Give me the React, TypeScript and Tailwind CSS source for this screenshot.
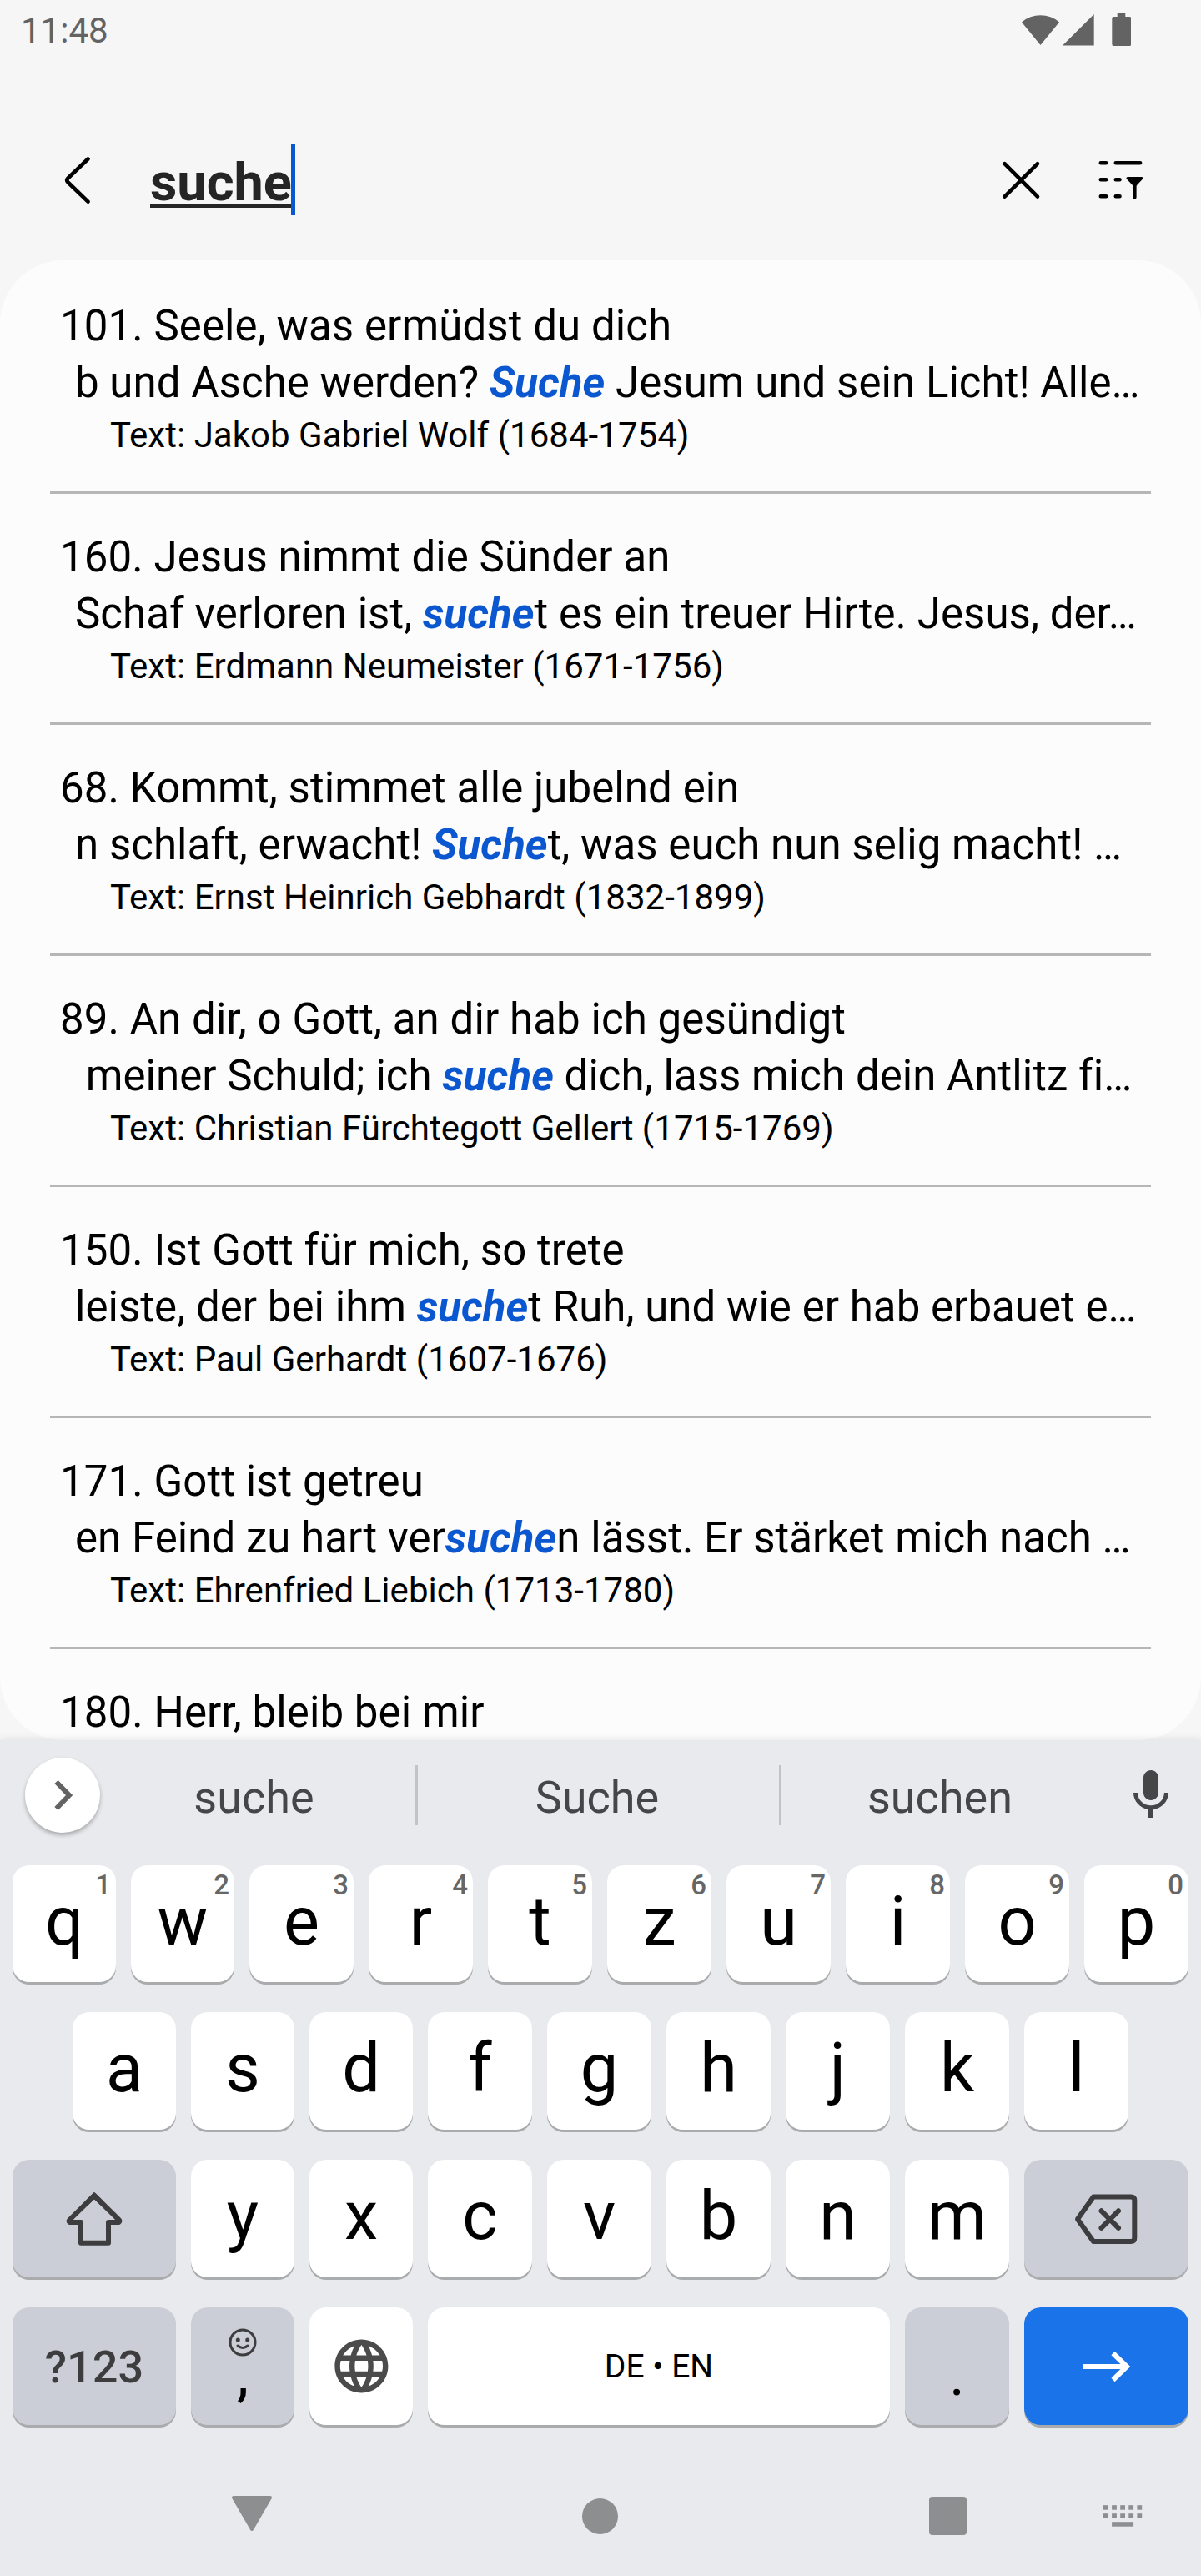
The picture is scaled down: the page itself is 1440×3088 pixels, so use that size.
import type { ReactNode } from 'react';

type Song = { title: string; before: string; hit: string; after: string; author: string };

const songs: Song[] = [
  { title: '101. Seele, was ermüdst du dich', before: 'b und Asche werden? ', hit: 'Suche', after: ' Jesum und sein Licht! Alle…', author: 'Text: Jakob Gabriel Wolf (1684-1754)' },
  { title: '160. Jesus nimmt die Sünder an', before: 'Schaf verloren ist, ', hit: 'suche', after: 't es ein treuer Hirte. Jesus, der…', author: 'Text: Erdmann Neumeister (1671-1756)' },
  { title: '68. Kommt, stimmet alle jubelnd ein', before: 'n schlaft, erwacht! ', hit: 'Suche', after: 't, was euch nun selig macht! …', author: 'Text: Ernst Heinrich Gebhardt (1832-1899)' },
  { title: '89. An dir, o Gott, an dir hab ich gesündigt', before: ' meiner Schuld; ich ', hit: 'suche', after: ' dich, lass mich dein Antlitz fi…', author: 'Text: Christian Fürchtegott Gellert (1715-1769)' },
  { title: '150. Ist Gott für mich, so trete', before: 'leiste, der bei ihm ', hit: 'suche', after: 't Ruh, und wie er hab erbauet e…', author: 'Text: Paul Gerhardt (1607-1676)' },
  { title: '171. Gott ist getreu', before: 'en Feind zu hart ver', hit: 'suche', after: 'n lässt. Er stärket mich nach …', author: 'Text: Ehrenfried Liebich (1713-1780)' },
  { title: '180. Herr, bleib bei mir', before: '', hit: '', after: '', author: '' },
];

function StatusBar() {
  return (
    <div className="flex h-[72px] items-center justify-between pl-[25px] pr-[84px] text-[#636363]">
      <span className="pt-[2px] text-[42px] leading-[74px]">11:48</span>
      <svg className="h-[72px] w-[131px]" viewBox="1225 0 131 72" fill="currentColor">
        <path d="M1247.5 54 1225 26.5a34.5 34.5 0 0 1 45 0Z" />
        <path d="M1274 54.5h37.7V17Z" />
        <path d="M1339.7 20v-4h9.6v4h5a2 2 0 0 1 2 2v31a2 2 0 0 1-2 2h-19a2 2 0 0 1-2-2V22a2 2 0 0 1 2-2Z" />
      </svg>
    </div>
  );
}

function Toolbar() {
  return (
    <div className="flex h-[240px] items-start pl-[76px] pr-[67px] pt-[101px]">
      <svg className="mt-[13px] h-[60px] w-9" viewBox="76 186 36 60" fill="none" stroke="#000" strokeWidth="4.6" strokeLinecap="round" strokeLinejoin="round">
        <path d="M105.500 190.500 81.500 213.500q-2.500 2.500 0 5L105.500 241.700" />
      </svg>
      <div className="ml-[68px] flex h-[85px] items-start">
        <span className="text-[63px] font-bold leading-[91px] text-[#252525] underline decoration-[3.5px] underline-offset-[5px]">suche</span>
        <span className="-ml-px h-[85px] w-[5px] bg-[#0b57d0]" />
      </div>
      <div className="ml-auto flex gap-[66px] pt-[13px]">
        <svg className="h-[60px] w-[52px]" viewBox="1198 186 52 60" fill="none" stroke="#000" strokeWidth="4.6" strokeLinecap="round">
          <path d="M1204.500 196.200 1244 235.700M1244 196.200 1204.500 235.700" />
        </svg>
        <svg className="h-[60px] w-[57px]" viewBox="1316 186 57 60" fill="none" stroke="#000" strokeWidth="4.6" strokeLinecap="round">
          <path d="M1319.800 195.200h6.400M1337.800 195.200h29.300M1319.800 215.200h6.400M1337.800 215.200h4.700M1319.800 235.300h6.400M1337.800 235.300h4.700M1360.300 222v14.500" />
          <path d="M1352 213.500h17l-8 8.500h-1Z" fill="#000" strokeWidth="3" strokeLinejoin="round" />
        </svg>
      </div>
    </div>
  );
}

function SongRow({ song }: { song: Song }) {
  return (
    <li className="mx-[60px] h-[277px] border-b-[3px] border-[#b6b6b6] pt-[42px] text-black">
      <div className="whitespace-pre pl-3 text-[51px] leading-[68px] tracking-[0.08px]">{song.title}</div>
      {song.hit && (
        <div className="whitespace-pre pl-[30px] text-[51px] leading-[68px] tracking-[0.04px]">
          {song.before}
          <b className="italic text-[#0b57d0]">{song.hit}</b>
          {song.after}
        </div>
      )}
      <div className="whitespace-pre pl-[72px] pt-px text-[42px] leading-[55px] tracking-[0.03px]">{song.author}</div>
    </li>
  );
}

const keyBase = 'relative flex items-center justify-center rounded-[20px] shadow-[0_3px_0_#aaabad]';

function LetterKey({ label, hint, narrow }: { label: string; hint?: string; narrow?: boolean }) {
  return (
    <div className={`${keyBase} ${hint ? 'h-[140px]' : 'h-[141px]'} ${narrow ? 'w-[124px]' : 'w-[125px]'} bg-white`}>
      <span className="-mt-[6px] text-[81px] leading-[141px] text-black">{label}</span>
      {hint && <span className="absolute right-[6px] top-[7px] text-[33px] font-medium leading-[34px] text-[#666]">{hint}</span>}
    </div>
  );
}

function SuggestionBar() {
  return (
    <div className="flex h-[150px] items-start pl-[30px] pr-6 text-[54px] leading-[62px] text-[#444648]">
      <div className="mt-[21px] flex h-[90px] w-[90px] items-center justify-center rounded-full bg-white pl-px shadow-[0_3px_5px_rgba(0,0,0,0.28)]">
        <svg className="h-10 w-6" viewBox="64 2132 24 40" fill="none" stroke="#636363" strokeWidth="6">
          <path d="m67.500 2136 15.500 16-15.500 16" />
        </svg>
      </div>
      <div className="mt-[38px] w-[378px] pr-[9px] text-center">suche</div>
      <div className="mt-[30px] h-[72px] w-[3px] bg-[#c2c3c6]" />
      <div className="mt-[38px] w-[433px] pr-[3px] text-center">Suche</div>
      <div className="mt-[30px] h-[72px] w-[3px] bg-[#c2c3c6]" />
      <div className="mt-[38px] w-[380px] text-center">suchen</div>
      <svg className="ml-auto mt-[30px] h-[72px] w-[72px]" viewBox="0 0 24 24" fill="currentColor">
        <path d="M12 14c1.660 0 2.990-1.340 2.990-3L15 5c0-1.660-1.340-3-3-3S9 3.340 9 5v6c0 1.660 1.340 3 3 3zm5.300-3c0 3-2.540 5.100-5.300 5.100S6.700 14 6.700 11H5c0 3.410 2.720 6.230 6 6.720V21h2v-3.280c3.280-.48 6-3.300 6-6.720h-1.700z" />
      </svg>
    </div>
  );
}

function ActionKey({ children, className }: { children: ReactNode; className: string }) {
  return <div className={`${keyBase} h-[141px] ${className}`}>{children}</div>;
}

function Keyboard() {
  return (
    <div className="flex flex-col gap-9 pl-[15px]">
      <div className="flex gap-[18px]">
        {'qwertzuiop'.split('').map((c, i) => (
          <LetterKey key={c} label={c} hint={String((i + 1) % 10)} narrow={i < 2} />
        ))}
      </div>
      <div className="flex gap-[18px] pl-[72px]">
        {'asdfghjkl'.split('').map((c, i) => (
          <LetterKey key={c} label={c} narrow={i < 3} />
        ))}
      </div>
      <div className="flex gap-[18px]">
        <ActionKey className="w-[196px] bg-[#cbced6]">
          <svg className="h-[70px] w-[74px]" viewBox="76 2624 74 70" fill="none" stroke="#3d3d3f" strokeWidth="6">
            <path d="M97 2663H83.500q-1.500-1.500 0-3L113 2631l29.500 29q1.500 1.500 0 3H130v24.800H97Z" strokeLinejoin="round" />
            <path d="m104 2639.800 9-8.800 9 8.800" />
          </svg>
        </ActionKey>
        {'yxcvbnm'.split('').map((c, i) => (
          <LetterKey key={c} label={c} narrow={i < 2} />
        ))}
        <ActionKey className="w-[197px] bg-[#cbced6]">
          <svg className="h-[70px] w-20" viewBox="1286 2627 80 70" fill="none" stroke="#3d3d3f" strokeWidth="6">
            <path d="M1291 2662.200 1310 2635.400h45q4.300 0 4.300 4.300v45q0 4.300-4.300 4.300h-45Z" strokeLinejoin="round" />
            <path d="m1319.500 2652.300 20.500 20.500M1340 2652.300l-20.500 20.500" strokeLinecap="round" />
          </svg>
        </ActionKey>
      </div>
      <div className="flex gap-[18px]">
        <ActionKey className="w-[196px] bg-[#cbced6]">
          <span className="pt-[2px] text-[54px] font-medium leading-[141px] text-[#3d3d3f]">?123</span>
        </ActionKey>
        <ActionKey className="w-[124px] flex-col bg-[#cbced6]">
          <svg className="mb-[-16px] h-9 w-9" viewBox="0 0 36 36" fill="none" stroke="#3d3d3f" strokeWidth="3">
            <circle cx="18" cy="18" r="15" />
            <circle cx="12.300" cy="15" r="2.500" fill="#3d3d3f" stroke="none" />
            <circle cx="23.700" cy="15" r="2.500" fill="#3d3d3f" stroke="none" />
            <path d="M12 22q6 5 12 0" strokeLinecap="round" />
          </svg>
          <span className="text-[72px] leading-[74px] text-black">,</span>
        </ActionKey>
        <ActionKey className="w-[124px] bg-white">
          <svg className="h-[76.800px] w-[76.800px]" viewBox="0 0 24 24" fill="#4b4b4b">
            <path d="M11.990 2C6.470 2 2 6.480 2 12s4.470 10 9.990 10C17.520 22 22 17.520 22 12S17.520 2 11.990 2zm6.930 6h-2.950c-.32-1.250-.78-2.450-1.380-3.560 1.840.63 3.370 1.910 4.330 3.560zM12 4.040c.83 1.200 1.480 2.530 1.910 3.960h-3.820c.43-1.430 1.080-2.760 1.910-3.960zM4.260 14C4.100 13.360 4 12.690 4 12s.1-1.360.26-2h3.380c-.08.66-.14 1.320-.14 2 0 .68.06 1.340.14 2H4.260zm.82 2h2.950c.32 1.250.78 2.450 1.380 3.560-1.840-.63-3.370-1.900-4.330-3.560zm2.950-8H5.080c.96-1.660 2.490-2.930 4.330-3.560C8.810 5.550 8.350 6.750 8.030 8zM12 19.960c-.83-1.200-1.480-2.530-1.910-3.960h3.820c-.43 1.430-1.080 2.760-1.910 3.960zM14.340 14H9.660c-.09-.66-.16-1.320-.16-2 0-.68.07-1.350.16-2h4.680c.09.65.16 1.320.16 2 0 .68-.07 1.340-.16 2zm.25 5.560c.6-1.110 1.060-2.310 1.380-3.560h2.950c-.96 1.650-2.490 2.930-4.330 3.560zM16.360 14c.08-.66.14-1.320.14-2 0-.68-.06-1.340-.14-2h3.380c.16.640.26 1.310.26 2s-.1 1.360-.26 2h-3.380z" />
          </svg>
        </ActionKey>
        <ActionKey className="w-[554px] bg-white">
          <span className="pt-px text-[39px] leading-[142px] text-black">DE • EN</span>
        </ActionKey>
        <ActionKey className="w-[125px] bg-[#cbced6]">
          <span className="pt-[20px] text-[72px] leading-[121px] text-black">.</span>
        </ActionKey>
        <ActionKey className="w-[197px] bg-[#1a73e8]">
          <svg className="h-10 w-[60px]" viewBox="1296 2817 60 40" fill="none" stroke="#fff" strokeWidth="6">
            <path d="M1297 2837h53M1333.500 2821l16.500 16-16.500 16" />
          </svg>
        </ActionKey>
      </div>
    </div>
  );
}

const keyDots = [0, 1, 2, 3, 4];

function NavBar() {
  return (
    <div className="mt-[71px] flex h-[76px] items-center pl-[277px] text-[#8d8e90]">
      <svg className="h-[60px] w-[50px]" viewBox="277 2986 50 60" fill="currentColor" stroke="currentColor" strokeWidth="4" strokeLinejoin="round">
        <path d="M280 2994h44l-22 38Z" />
      </svg>
      <div className="ml-[371px] h-[43px] w-[43px] rounded-full bg-[#8d8e90]" />
      <div className="ml-[373px] h-[46px] w-[45px] rounded-[4px] bg-[#8d8e90]" />
      <svg className="ml-[163px] h-[30px] w-[48px]" viewBox="1322 3001 48 30" fill="currentColor">
        {keyDots.map((n) => (
          <g key={n}>
            <rect x={1323 + n * 10.100} y="3003.200" width="5.800" height="5.500" />
            <rect x={1323 + n * 10.100} y="3013.200" width="5.800" height="5.500" />
          </g>
        ))}
        <rect x="1333.100" y="3023.200" width="26" height="5.500" />
      </svg>
    </div>
  );
}

export default function App() {
  return (
    <div className="flex h-[3088px] w-[1440px] flex-col overflow-hidden bg-[#f6f6f6] font-['Roboto',sans-serif]">
      <StatusBar />
      <Toolbar />
      <ul className="h-[1774px] overflow-hidden rounded-[76px] bg-[#fcfcfc] pt-[3px]">
        {songs.map((s) => (
          <SongRow key={s.title} song={s} />
        ))}
      </ul>
      <div className="relative h-[1002px] bg-[#e8eaed] shadow-[0_-1px_9px_rgba(0,0,0,0.09)]">
        <SuggestionBar />
        <Keyboard />
        <NavBar />
      </div>
    </div>
  );
}
